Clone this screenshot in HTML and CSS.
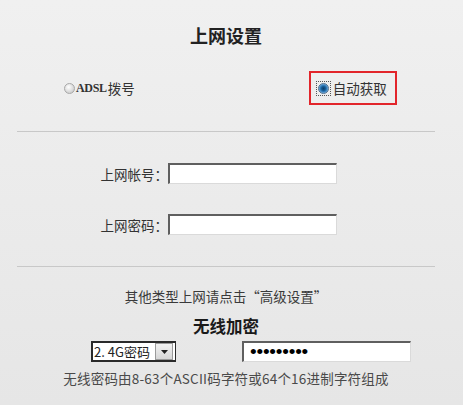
FILE: index.html
```html
<!DOCTYPE html>
<html lang="zh-CN">
<head>
<meta charset="utf-8">
<title>上网设置</title>
<link rel="stylesheet" href="styles.css">
</head>
<body>
<div class="page">
  <h1 class="title">上网设置</h1>
  <div class="radios">
    <label class="opt opt-adsl"><span class="radio"></span><span class="ascii">ADSL</span>拨号</label>
    <label class="opt opt-auto"><span class="focus"><span class="radio checked"></span></span>自动获取</label>
  </div>
  <div class="rule rule-1"></div>
  <div class="field field-1"><span class="lbl">上网帐号：</span><span class="input"></span></div>
  <div class="field field-2"><span class="lbl">上网密码：</span><span class="input"></span></div>
  <div class="rule rule-2"></div>
  <p class="note">其他类型上网请点击“高级设置”</p>
  <h2 class="subtitle">无线加密</h2>
  <div class="controls">
    <span class="select"><span class="sel-text">2. 4G密码</span><span class="sel-btn"><svg width="7" height="4" viewBox="0 0 7 4"><path d="M0 0h7L3.5 4z" fill="#222"/></svg></span></span>
    <span class="input pwd">•••••••••</span>
  </div>
  <p class="hint">无线密码由8-63个ASCII码字符或64个16进制字符组成</p>
</div>
</body>
</html>
```
FILE: styles.css
```css
html, body {
  margin: 0;
  padding: 0;
}
body {
  width: 463px;
  height: 405px;
  overflow: hidden;
  background: linear-gradient(#f0f0f0, #e6e6e6);
  font-family: "Noto Sans CJK SC", "Liberation Sans", sans-serif;
  color: #333;
  font-size: 13.5px;
}
.page {
  margin-left: 17px;
  width: 418px;
  display: flex;
  flex-direction: column;
}
.title {
  margin: 0;
  padding-top: 24px;
  line-height: 22px;
  font-size: 18px;
  font-weight: bold;
  color: #222;
  text-align: center;
}
.radios {
  margin-top: 25px;
  height: 34px;
  display: flex;
  align-items: center;
}
.opt {
  display: flex;
  align-items: center;
  line-height: 18px;
}
.opt-adsl {
  margin-left: 47px;
}
.ascii {
  font-family: "Liberation Serif", serif;
  font-weight: bold;
  font-size: 12px;
  letter-spacing: -0.3px;
  margin-right: 1px;
}
.opt-auto {
  margin-left: 174px;
  box-sizing: border-box;
  width: 88px;
  height: 34px;
  border: 2px solid #e2252b;
  padding-left: 5px;
}
.radio {
  display: inline-block;
  width: 11px;
  height: 11px;
  border-radius: 50%;
  box-sizing: border-box;
  border: 1px solid #a8a8a8;
  background: radial-gradient(circle at 40% 35%, #ffffff, #cfcfcf 75%);
  margin-right: 1px;
}
.focus {
  display: inline-flex;
  align-items: center;
  justify-content: center;
  width: 13px;
  height: 13px;
  border: 1px dotted #555;
  margin-right: 2px;
}
.radio.checked {
  margin: 0;
  border-color: #4f6f8e;
  background: radial-gradient(circle, #0a3d6b 0, #14588f 30%, #3a86c4 55%, #a9c9e4 85%);
}
.rule {
  height: 0;
  border-top: 1px solid #c8c8c8;
}
.rule-1 { margin-top: 26px; }
.field {
  display: flex;
  align-items: center;
  height: 21px;
}
.field-1 { margin-top: 31px; }
.field-2 { margin-top: 30px; }
.lbl {
  width: 151px;
  text-align: right;
}
.input {
  box-sizing: border-box;
  display: inline-block;
  width: 169px;
  height: 21px;
  background: #fff;
  border-top: 2px solid #5f5f5f;
  border-left: 2px solid #5f5f5f;
  border-right: 1px solid #dadada;
  border-bottom: 1px solid #dadada;
}
.rule-2 { margin-top: 31px; }
.note {
  margin: 20px 0 0;
  line-height: 18px;
  text-align: center;
  color: #3a3a3a;
}
.subtitle {
  margin: 11px 0 0;
  line-height: 20px;
  font-size: 16.5px;
  font-weight: bold;
  color: #1a1a1a;
  text-align: center;
}
.controls {
  margin-top: 5px;
  display: flex;
  align-items: center;
  padding-left: 74px;
  gap: 66px;
}
.select {
  box-sizing: border-box;
  width: 85px;
  height: 21px;
  display: flex;
  align-items: center;
  background: #fff;
  border: 2px solid #2a2a2a;
  border-right-width: 1px;
}
.sel-text {
  flex: 1;
  padding-left: 1px;
  font-size: 13px;
  line-height: 17px;
  color: #222;
}
.sel-btn {
  box-sizing: border-box;
  width: 18px;
  height: 17px;
  margin-right: 2px;
  display: flex;
  align-items: center;
  justify-content: center;
  background: linear-gradient(#f2f2f2, #d6d6d6);
  border: 1px solid #9a9a9a;
}
.pwd {
  font-family: "Liberation Sans", sans-serif;
  font-size: 19px;
  line-height: 17px;
  letter-spacing: -0.2px;
  padding-left: 6px;
  color: #000;
}
.hint {
  margin: 8px 0 0;
  line-height: 16px;
  text-align: center;
  color: #4a4a4a;
  letter-spacing: 0.2px;
}
```
